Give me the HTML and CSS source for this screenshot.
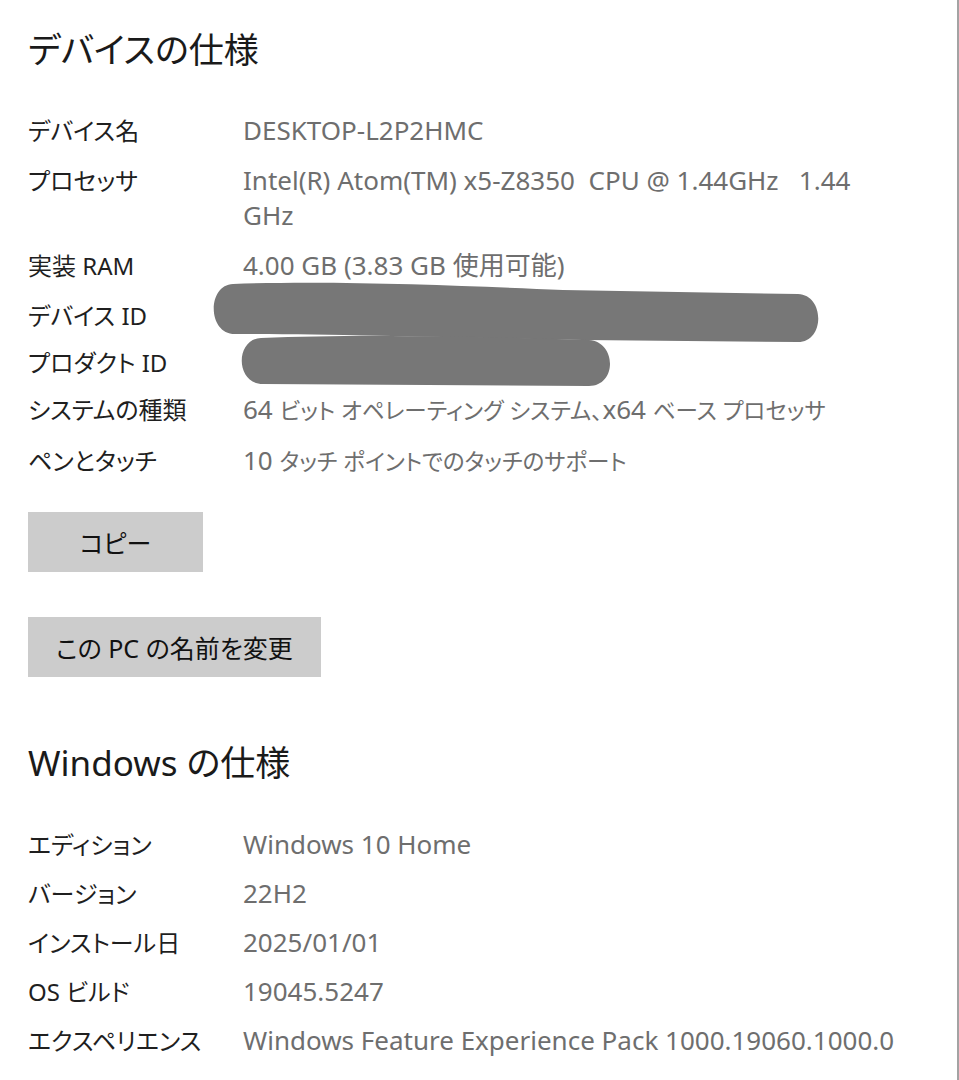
FILE: index.html
```html
<!DOCTYPE html>
<html lang="ja">
<head>
    <meta charset="UTF-8">
    <meta name="viewport" content="width=device-width, initial-scale=1.0">
    <title>バージョン情報</title>
    <link rel="stylesheet" href="styles.css">
</head>
<body>
    <main class="page">
        <section class="specs device">
            <h2 class="title">デバイスの仕様</h2>
            <dl class="spec-list">
                <div class="spec-row"><dt>デバイス名</dt><dd>DESKTOP-L2P2HMC</dd></div>
                <div class="spec-row"><dt>プロセッサ</dt><dd>Intel(R) Atom(TM) x5-Z8350  CPU @ 1.44GHz   1.44 GHz</dd></div>
                <div class="spec-row"><dt>実装 RAM</dt><dd>4.00 GB (3.83 GB 使用可能)</dd></div>
                <div class="spec-row short"><dt>デバイス ID</dt><dd></dd></div>
                <div class="spec-row short"><dt>プロダクト ID</dt><dd></dd></div>
                <div class="spec-row"><dt>システムの種類</dt><dd>64 <span class="ja">ビット オペレーティング システム、</span>x64 <span class="ja">ベース プロセッサ</span></dd></div>
                <div class="spec-row"><dt>ペンとタッチ</dt><dd>10 <span class="ja">タッチ ポイントでのタッチのサポート</span></dd></div>
            </dl>

            <!-- hidden ids, painted over like the original -->
            <svg class="redact" width="620" height="110" viewBox="0 0 620 110">
                <path d="M20 2 C120 -2 260 4 350 8 L585 12 C612 13 612 60 585 60 L370 58 C250 56 120 52 22 52 C-6 52 -6 3 20 2 Z" fill="#777"/>
                <path d="M48 56 C150 52 280 55 376 58 C404 60 404 104 376 104 L50 102 C22 102 22 57 48 56 Z" fill="#777"/>
            </svg>

            <div class="actions">
                <button class="btn" type="button">コピー</button>
                <button class="btn" type="button">この PC の名前を変更</button>
            </div>
        </section>

        <section class="specs windows">
            <h2 class="title">Windows の仕様</h2>
            <dl class="spec-list">
                <div class="spec-row"><dt>エディション</dt><dd>Windows 10 Home</dd></div>
                <div class="spec-row"><dt>バージョン</dt><dd>22H2</dd></div>
                <div class="spec-row"><dt>インストール日</dt><dd>2025/01/01</dd></div>
                <div class="spec-row"><dt>OS ビルド</dt><dd>19045.5247</dd></div>
                <div class="spec-row"><dt>エクスペリエンス</dt><dd>Windows Feature Experience Pack 1000.19060.1000.0</dd></div>
            </dl>
        </section>
    </main>
</body>
</html>
```

FILE: styles.css
```css
body { margin: 0; background: #fff; font-family: "Noto Sans", "Noto Sans CJK JP", sans-serif; font-feature-settings: "palt"; }
.page { min-height: 100vh; box-sizing: border-box; padding: 30px 0 0 28px; border-right: 2px solid #a3a3a3; }
.specs { position: relative; }
.title { margin: 0; font-size: 35px; line-height: 40px; font-weight: 400; color: #1a1a1a; }
.spec-list { margin: 43px 0 0; padding: 0; }
.spec-row { display: flex; margin-bottom: 15px; line-height: 35px; }
.spec-row.short { margin-bottom: 12px; }
.spec-row dt { width: 215px; flex-shrink: 0; font-size: 24px; color: #1f1f1f; }
.spec-row dd { margin: 0; font-size: 26px; color: #6e6e6e; white-space: pre-wrap; max-width: 658px; }
.spec-row .ja { font-size: 22.5px; }
.redact { position: absolute; left: 185px; top: 252px; }
.actions { display: flex; flex-direction: column; align-items: flex-start; gap: 45px; margin-top: 33px; }
.btn { height: 60px; min-width: 175px; padding: 0 28px; border: none; background: #cccccc; color: #111; font-family: inherit; font-feature-settings: "palt"; font-size: 25px; }
.windows { margin-top: 66px; }
.windows .spec-list { margin-top: 44px; }
.windows .spec-row { margin-bottom: 14px; }
```
